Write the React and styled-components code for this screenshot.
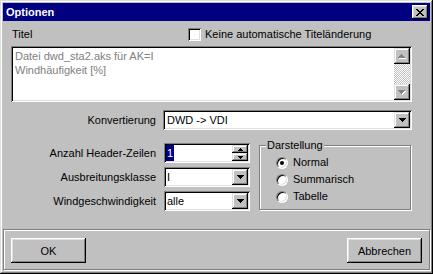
import React from 'react';
import styled, { createGlobalStyle, css } from 'styled-components';

const Global = createGlobalStyle`
  html, body { margin: 0; padding: 0; background: #c0c0c0; }
  body {
    font-family: "Liberation Sans", Arial, sans-serif;
    font-size: 11px;
    color: #000;
  }
`;

const raised = css`
  background: #c0c0c0;
  box-shadow: inset -1px -1px #000, inset 1px 1px #dfdfdf,
    inset -2px -2px #808080, inset 2px 2px #fff;
`;

const sunken = css`
  background: #fff;
  box-shadow: inset 1px 1px #808080, inset -1px -1px #fff,
    inset 2px 2px #000, inset -2px -2px #dfdfdf;
`;

const etched = css`
  border: 1px solid #808080;
  box-shadow: inset 1px 1px #fff, 1px 1px #fff;
`;

const Window = styled.div`
  width: 433px;
  height: 274px;
  box-sizing: border-box;
  padding: 3px 3px 4px 3px;
  background: #c0c0c0;
  box-shadow: inset -1px -1px #000, inset 1px 1px #dfdfdf,
    inset -2px -2px #808080, inset 2px 2px #fff;
  display: flex;
  flex-direction: column;
`;

const TitleBar = styled.div`
  height: 18px;
  flex: none;
  background: #000080;
  display: flex;
  align-items: center;
  justify-content: space-between;
  padding: 0 2px 0 3px;
`;

const TitleText = styled.span`
  color: #fff;
  font-weight: bold;
  font-size: 11px;
  line-height: 13px;
`;

const CloseButton = styled.div`
  ${raised};
  width: 16px;
  height: 14px;
  display: flex;
  align-items: center;
  justify-content: center;
  box-shadow: inset -1px -1px #000, inset 1px 1px #fff,
    inset -2px -2px #808080, inset 2px 2px #dfdfdf;
`;

const Body = styled.div`
  flex: 1;
  padding: 6px 18px 0 8px;
  display: flex;
  flex-direction: column;
`;

const HeaderRow = styled.div`
  height: 14px;
  display: grid;
  grid-template-columns: 177px auto;
  align-items: center;
`;

const PlainLabel = styled.span`
  padding-left: 1px;
  line-height: 13px;
`;

const CheckLabel = styled.label`
  display: flex;
  align-items: center;
  gap: 4px;
  line-height: 13px;
`;

const CheckBox = styled.span`
  ${sunken};
  width: 13px;
  height: 13px;
  flex: none;
`;

const TextField = styled.div`
  ${sunken};
  margin-top: 5px;
  height: 56px;
  box-sizing: border-box;
  padding: 2px;
  display: flex;
`;

const TextContent = styled.div`
  flex: 1;
  padding: 1px 2px;
  color: #808080;
  line-height: 14px;
`;

const ScrollBar = styled.div`
  width: 16px;
  flex: none;
  display: flex;
  flex-direction: column;
  justify-content: space-between;
  background-color: #fff;
  background-image: conic-gradient(#c0c0c0 25%, transparent 0 50%, #c0c0c0 0 75%, transparent 0);
  background-size: 2px 2px;
`;

const ArrowButton = styled.div`
  ${raised};
  width: 16px;
  height: ${(p) => p.$h || 16}px;
  flex: none;
  display: flex;
  align-items: center;
  justify-content: center;
`;

const FieldRow = styled.div`
  display: flex;
  align-items: center;
  gap: ${(p) => p.$gap}px;
  height: 20px;
  margin-top: ${(p) => p.$top || 0}px;
`;

const RowLabel = styled.span`
  width: 145px;
  flex: none;
  text-align: right;
  line-height: 13px;
`;

const Field = styled.div`
  ${sunken};
  height: 20px;
  box-sizing: border-box;
  padding: 2px;
  display: flex;
  align-items: center;
  ${(p) => (p.$width ? `width: ${p.$width}px; flex: none;` : 'flex: 1;')}
`;

const FieldValue = styled.span`
  flex: 1;
  padding-left: ${(p) => p.$pad}px;
  line-height: 16px;
  white-space: nowrap;
`;

const Selected = styled.span`
  background: #000080;
  color: #fff;
  padding: 0 1px;
  display: inline-block;
  line-height: 16px;
`;

const SpinColumn = styled.div`
  display: flex;
  flex-direction: column;
  flex: none;
`;

const LowerArea = styled.div`
  display: flex;
  align-items: flex-start;
  margin-top: 13px;
`;

const LeftColumn = styled.div`
  display: flex;
  flex-direction: column;
  gap: 4px;
`;

const GroupBox = styled.div`
  ${etched};
  position: relative;
  margin: 2px 0 0 9px;
  width: 152px;
  height: 65px;
  box-sizing: border-box;
  padding: 8px 0 0 16px;
`;

const Legend = styled.span`
  position: absolute;
  top: -7px;
  left: 6px;
  background: #c0c0c0;
  padding: 0 1px;
  line-height: 13px;
`;

const RadioRow = styled.label`
  height: 17px;
  display: flex;
  align-items: center;
  gap: 5px;
  line-height: 13px;
`;

const RadioCircle = styled.span`
  width: 12px;
  height: 12px;
  box-sizing: border-box;
  border-radius: 50%;
  background: #fff;
  border: 1px solid;
  border-color: #808080 #fff #fff #808080;
  box-shadow: inset 1px 1px #000, inset -1px -1px #dfdfdf;
  position: relative;
  flex: none;
  ${(p) =>
    p.$checked &&
    css`
      &::after {
        content: '';
        position: absolute;
        left: 3px;
        top: 3px;
        width: 4px;
        height: 4px;
        border-radius: 50%;
        background: #000;
      }
    `}
`;

const ButtonPanel = styled.div`
  ${etched};
  height: 41px;
  flex: none;
  box-sizing: border-box;
  padding: 8px 7px 0 7px;
  display: flex;
  justify-content: space-between;
  align-items: flex-start;
`;

const Button = styled.button`
  ${raised};
  box-shadow: inset -1px -1px #000, inset 1px 1px #fff,
    inset -2px -2px #808080, inset 2px 2px #dfdfdf;
  border: none;
  width: 75px;
  height: 25px;
  padding: 0;
  font-family: inherit;
  font-size: 11px;
  color: #000;
`;

const CloseGlyph = () => (
  <svg width="8" height="7" viewBox="0 0 8 7" shapeRendering="crispEdges">
    <path
      d="M0 0h2v1H0z M6 0h2v1H6z M1 1h2v1H1z M5 1h2v1H5z M2 2h4v1H2z M3 3h2v1H3z M2 4h4v1H2z M1 5h2v1H1z M5 5h2v1H5z M0 6h2v1H0z M6 6h2v1H6z"
      fill="#000"
    />
  </svg>
);

const DownArrow = () => (
  <svg width="7" height="4" viewBox="0 0 7 4" shapeRendering="crispEdges">
    <path d="M0 0h7v1H0z M1 1h5v1H1z M2 2h3v1H2z M3 3h1v1H3z" fill="#000" />
  </svg>
);

const SmallArrow = ({ up }) => (
  <svg width="5" height="3" viewBox="0 0 5 3" shapeRendering="crispEdges">
    <path
      d={up ? 'M2 0h1v1H2z M1 1h3v1H1z M0 2h5v1H0z' : 'M0 0h5v1H0z M1 1h3v1H1z M2 2h1v1H2z'}
      fill="#000"
    />
  </svg>
);

const DisabledArrow = ({ up }) => (
  <svg width="8" height="5" viewBox="0 0 8 5" shapeRendering="crispEdges">
    {up ? (
      <>
        <path d="M4 1h1v1H4z M3 2h3v1H3z M2 3h5v1H2z M1 4h7v1H1z" fill="#fff" />
        <path d="M3 0h1v1H3z M2 1h3v1H2z M1 2h5v1H1z M0 3h7v1H0z" fill="#808080" />
      </>
    ) : (
      <>
        <path d="M1 1h7v1H1z M2 2h5v1H2z M3 3h3v1H3z M4 4h1v1H4z" fill="#fff" />
        <path d="M0 0h7v1H0z M1 1h5v1H1z M2 2h3v1H2z M3 3h1v1H3z" fill="#808080" />
      </>
    )}
  </svg>
);

const SelectField = ({ value, width, pad = 2 }) => (
  <Field $width={width}>
    <FieldValue $pad={pad}>{value}</FieldValue>
    <ArrowButton>
      <DownArrow />
    </ArrowButton>
  </Field>
);

export default function App() {
  return (
    <>
      <Global />
      <Window>
        <TitleBar>
          <TitleText>Optionen</TitleText>
          <CloseButton>
            <CloseGlyph />
          </CloseButton>
        </TitleBar>
        <Body>
          <HeaderRow>
            <PlainLabel>Titel</PlainLabel>
            <CheckLabel>
              <CheckBox />
              Keine automatische Titeländerung
            </CheckLabel>
          </HeaderRow>
          <TextField>
            <TextContent>
              Datei dwd_sta2.aks für AK=I
              <br />
              Windhäufigkeit [%]
            </TextContent>
            <ScrollBar>
              <ArrowButton>
                <DisabledArrow up />
              </ArrowButton>
              <ArrowButton>
                <DisabledArrow />
              </ArrowButton>
            </ScrollBar>
          </TextField>
          <FieldRow $gap={7} $top={8}>
            <RowLabel>Konvertierung</RowLabel>
            <SelectField value="DWD -> VDI" />
          </FieldRow>
          <LowerArea>
            <LeftColumn>
              <FieldRow $gap={8}>
                <RowLabel>Anzahl Header-Zeilen</RowLabel>
                <Field $width={86}>
                  <FieldValue $pad={0}>
                    <Selected>1</Selected>
                  </FieldValue>
                  <SpinColumn>
                    <ArrowButton $h={8}>
                      <SmallArrow up />
                    </ArrowButton>
                    <ArrowButton $h={8}>
                      <SmallArrow />
                    </ArrowButton>
                  </SpinColumn>
                </Field>
              </FieldRow>
              <FieldRow $gap={8}>
                <RowLabel>Ausbreitungsklasse</RowLabel>
                <SelectField value="I" width={86} pad={1} />
              </FieldRow>
              <FieldRow $gap={8}>
                <RowLabel>Windgeschwindigkeit</RowLabel>
                <SelectField value="alle" width={86} pad={1} />
              </FieldRow>
            </LeftColumn>
            <GroupBox>
              <Legend>Darstellung</Legend>
              <RadioRow>
                <RadioCircle $checked />
                Normal
              </RadioRow>
              <RadioRow>
                <RadioCircle />
                Summarisch
              </RadioRow>
              <RadioRow>
                <RadioCircle />
                Tabelle
              </RadioRow>
            </GroupBox>
          </LowerArea>
        </Body>
        <ButtonPanel>
          <Button>OK</Button>
          <Button>Abbrechen</Button>
        </ButtonPanel>
      </Window>
    </>
  );
}
